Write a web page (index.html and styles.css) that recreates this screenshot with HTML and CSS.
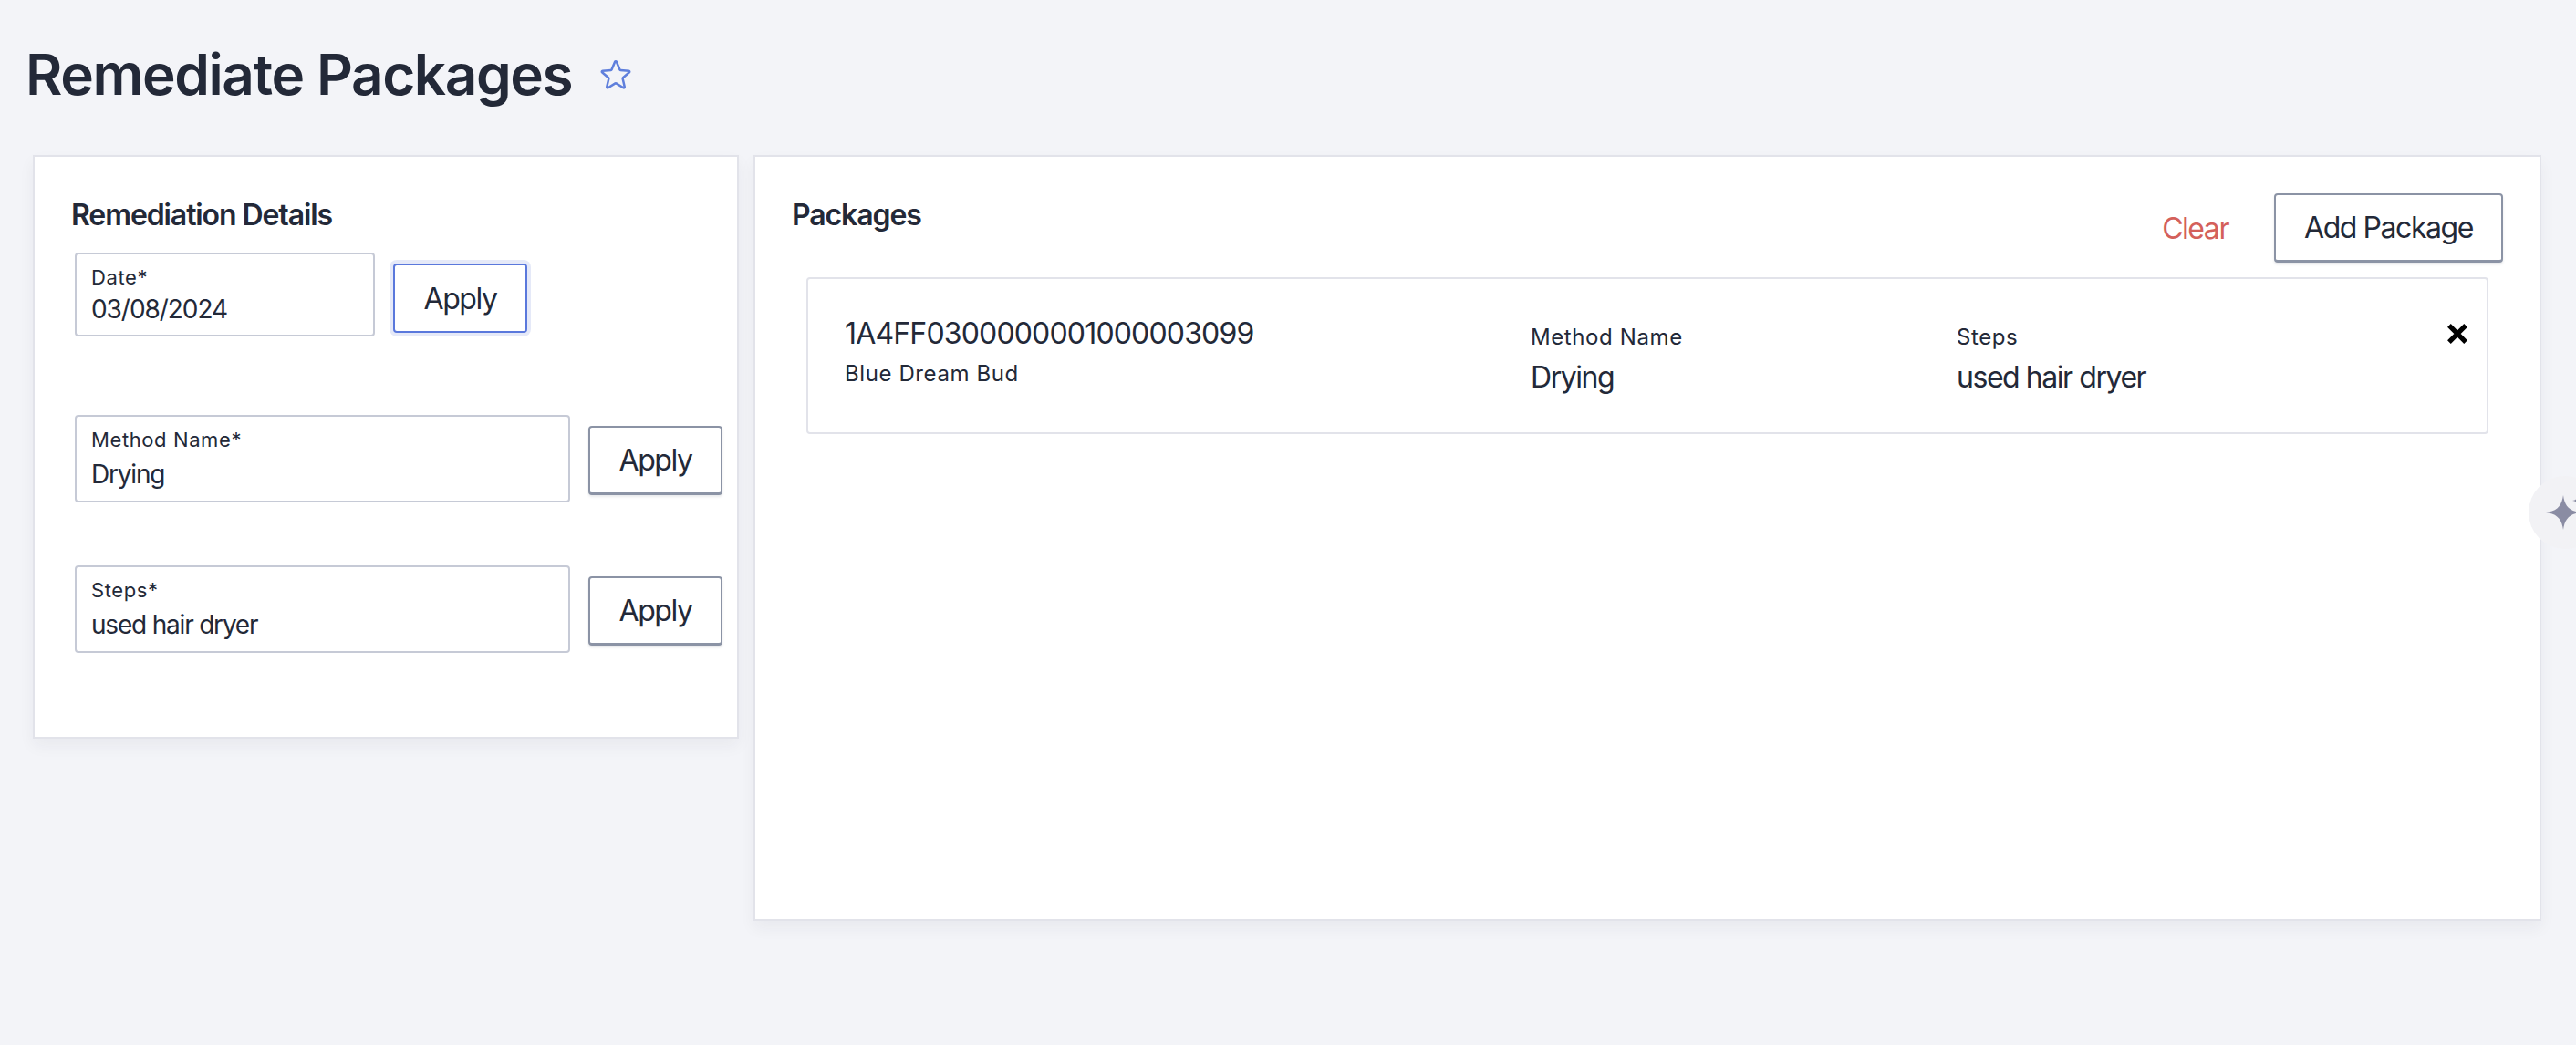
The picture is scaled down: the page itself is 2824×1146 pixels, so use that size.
FILE: index.html
```html
<!DOCTYPE html>
<html lang="en">
<head>
<meta charset="utf-8">
<title>Remediate Packages</title>
<link rel="stylesheet" href="styles.css">
</head>
<body>
<header class="page-head">
  <h1 class="page-title">Remediate Packages</h1>
  <svg class="star" viewBox="0 0 24 24" aria-hidden="true"><path d="M11.48 3.5a.56.56 0 0 1 1.04 0l2.13 5.11a.56.56 0 0 0 .47.34l5.52.44c.5.04.7.66.32.99l-4.2 3.6a.56.56 0 0 0-.18.55l1.28 5.39a.56.56 0 0 1-.84.61l-4.73-2.89a.56.56 0 0 0-.58 0l-4.73 2.89a.56.56 0 0 1-.84-.61l1.28-5.39a.56.56 0 0 0-.18-.55l-4.2-3.6a.56.56 0 0 1 .32-.99l5.52-.44a.56.56 0 0 0 .47-.34z"/></svg>
</header>
<main class="layout">
  <section class="card details">
    <h2 class="card-title">Remediation Details</h2>
    <div class="field-row first">
      <div class="field short"><span class="field-label">Date*</span><span class="field-value">03/08/2024</span></div>
      <button class="btn focused" type="button">Apply</button>
    </div>
    <div class="field-row second">
      <div class="field"><span class="field-label">Method Name*</span><span class="field-value">Drying</span></div>
      <button class="btn" type="button">Apply</button>
    </div>
    <div class="field-row third">
      <div class="field"><span class="field-label">Steps*</span><span class="field-value">used hair dryer</span></div>
      <button class="btn" type="button">Apply</button>
    </div>
  </section>
  <section class="card packages">
    <div class="packages-head">
      <h2 class="card-title">Packages</h2>
      <div class="actions">
        <button class="link-danger" type="button">Clear</button>
        <button class="btn add" type="button">Add Package</button>
      </div>
    </div>
    <article class="package">
      <div class="pkg-id-col">
        <div class="pkg-id">1A4FF0300000001000003099</div>
        <div class="pkg-name">Blue Dream Bud</div>
      </div>
      <div class="pkg-method">
        <div class="pkg-label">Method Name</div>
        <div class="pkg-value">Drying</div>
      </div>
      <div class="pkg-steps">
        <div class="pkg-label">Steps</div>
        <div class="pkg-value">used hair dryer</div>
      </div>
      <svg class="remove" viewBox="0 0 20 20" aria-hidden="true"><path d="M3 3l14 14M17 3L3 17"/></svg>
    </article>
  </section>
</main>
<div class="assistant">
  <svg viewBox="0 0 52 40" aria-hidden="true"><path d="M19 1C20.500 12 25 18.500 38 20 25 21.500 20.500 28 19 39 17.500 28 13 21.500 0 20 13 18.500 17.500 12 19 1z"/><path d="M35 1c.5 3.500 1.500 5.500 6 6-4.500.5-5.500 2.500-6 6-.5-3.500-1.500-5.500-6-6 4.500-.5 5.500-2.500 6-6z"/></svg>
</div>
</body>
</html>
```
FILE: styles.css
```css
* { box-sizing: border-box; }
html, body { margin: 0; padding: 0; }
body {
  height: 1146px;
  overflow: hidden;
  position: relative;
  background: #f3f4f8;
  color: #232938;
  font-family: Inter, "Liberation Sans", sans-serif;
}
.page-head {
  display: flex;
  align-items: center;
  gap: 28px;
  height: 170px;
  padding: 0 0 6px 28px;
}
.page-title {
  margin: 0;
  font-size: 62px;
  line-height: 72px;
  font-weight: 600;
  letter-spacing: -1.4px;
}
.star {
  width: 40px;
  height: 40px;
  fill: none;
  stroke: #5f7fdc;
  stroke-width: 1.5;
  stroke-linejoin: round;
}
.layout {
  display: flex;
  align-items: flex-start;
  gap: 16px;
  padding: 0 38px 0 36px;
}
.card {
  background: #fff;
  border: 2px solid #e2e3ea;
  box-shadow: 0 8px 16px rgba(30, 35, 60, 0.05);
}
.details {
  width: 774px;
  height: 640px;
  flex: none;
  padding: 44px 0 0 40px;
}
.packages {
  flex: 1;
  height: 840px;
  padding: 44px 40px 0 40px;
}
.card-title {
  margin: 0;
  font-size: 32px;
  line-height: 40px;
  font-weight: 600;
  letter-spacing: -1.1px;
}
.field-row {
  display: flex;
  align-items: center;
  gap: 20px;
  margin-left: 4px;
}
.field-row.first { margin-top: 21px; }
.field-row.second { margin-top: 86px; }
.field-row.third { margin-top: 69px; }
.field {
  display: flex;
  flex-direction: column;
  width: 543px;
  height: 96px;
  padding: 11px 16px 0;
  background: #fff;
  border: 2px solid #c6cad6;
  border-radius: 4px;
}
.field.short { width: 329px; height: 92px; padding-top: 11px; }
.field-label {
  font-size: 22px;
  line-height: 28px;
  font-weight: 400;
  letter-spacing: 0.6px;
}
.field-value {
  margin-top: 6px;
  font-size: 28px;
  line-height: 36px;
  letter-spacing: -1.2px;
}
.short .field-value { margin-top: 3px; letter-spacing: -1.05px; }
.btn {
  width: 147px;
  height: 76px;
  margin-top: 4px;
  padding: 0;
  background: #fff;
  border: 2px solid #8b93a5;
  border-bottom-width: 3px;
  border-radius: 4px;
  color: #232938;
  font: 400 32px Inter, "Liberation Sans", sans-serif;
  letter-spacing: -1.45px;
  box-shadow: 0 2px 3px rgba(30, 35, 60, 0.1);
}
.btn.focused {
  align-self: flex-start;
  margin-top: 12px;
  border: 2px solid #5a78dc;
  box-shadow: 0 0 0 4px #e5e9f8;
}
.packages-head {
  display: flex;
  justify-content: space-between;
  align-items: flex-start;
}
.actions {
  display: flex;
  align-items: center;
  gap: 50px;
  margin: -4px 0 0 0;
}
.link-danger {
  padding: 0;
  background: none;
  border: 0;
  color: #d4605a;
  font: 400 32px Inter, "Liberation Sans", sans-serif;
  letter-spacing: -1.45px;
}
.btn.add { width: 251px; margin-top: 0; }
.package {
  display: flex;
  align-items: flex-start;
  height: 172px;
  margin: 16px 16px 0 16px;
  padding: 40px 0 0 40px;
  border: 2px solid #e2e3ea;
  border-radius: 4px;
}
.pkg-id-col { width: 752px; flex: none; }
.pkg-id { font-size: 32px; line-height: 40px; letter-spacing: -0.83px; }
.pkg-name {
  margin-top: 9px;
  font-size: 24px;
  line-height: 30px;
  font-weight: 400;
  letter-spacing: 0.6px;
}
.pkg-method { width: 467px; flex: none; padding-top: 8px; }
.pkg-label {
  font-size: 24px;
  line-height: 32px;
  font-weight: 400;
  letter-spacing: 0.6px;
}
.pkg-value {
  margin-top: 8px;
  font-size: 32px;
  line-height: 40px;
  letter-spacing: -1.45px;
}
.pkg-steps { flex: 1; padding-top: 8px; }
.remove {
  width: 26px;
  height: 26px;
  margin: 7px 19px 0 0;
  flex: none;
  fill: none;
  stroke: #000;
  stroke-width: 4;
}
.assistant {
  position: absolute;
  left: 2772px;
  top: 522px;
  width: 80px;
  height: 80px;
  display: flex;
  align-items: center;
  padding-left: 19px;
  border-radius: 50%;
  background: #f2f2f5;
}
.assistant svg {
  width: 52px;
  height: 40px;
  flex: none;
  fill: #8a8ca3;
}
```
